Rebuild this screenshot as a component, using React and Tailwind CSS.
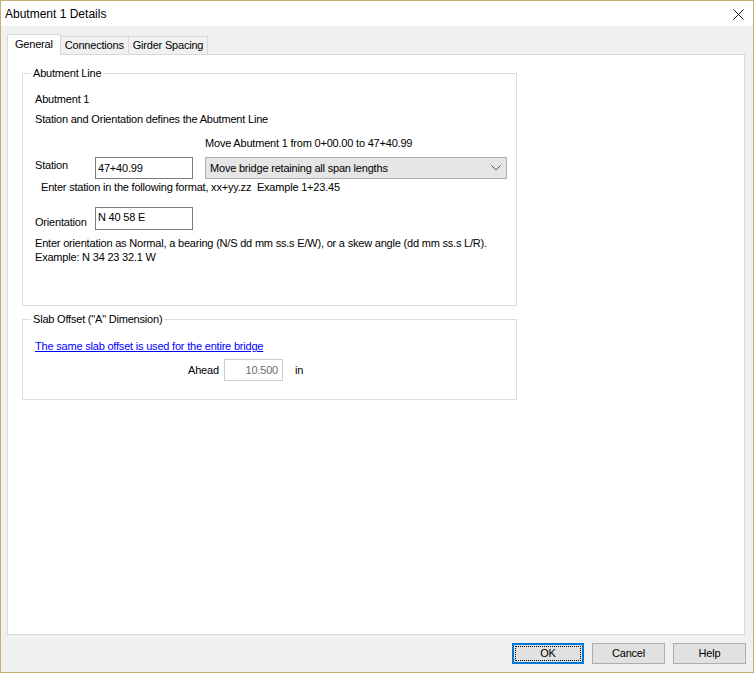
import React from "react";

/**
 * Abutment Details dialog (Windows style property sheet)
 */
function Tab({ label, active }) {
  if (active) {
    return (
      <div className="h-[21px] px-[7px] bg-white border border-b-0 border-[#d9d9d9] leading-[19px] relative z-10 -mb-px">
        {label}
      </div>
    );
  }
  return (
    <div className="h-[18px] mt-[3px] px-[4px] bg-[#f0f0f0] border border-b-0 border-l-0 border-[#d9d9d9] leading-[17px]">
      {label}
    </div>
  );
}

function Button({ label, focused }) {
  if (focused) {
    return (
      <div className="w-[72px] h-[21px] border-2 border-[#0078d7] bg-[#e1e1e1] p-px">
        <div className="h-full border border-dotted border-black flex items-center justify-center leading-none">
          {label}
        </div>
      </div>
    );
  }
  return (
    <div className="w-[73px] h-[21px] border border-[#adadad] bg-[#e1e1e1] flex items-center justify-center leading-none">
      {label}
    </div>
  );
}

function TextBox({ value, className = "", muted }) {
  return (
    <div
      className={
        "h-[22px] border flex items-center px-[2px] bg-white " +
        (muted ? "border-[#cccccc] text-[#6d6d6d] justify-end pr-[4px] " : "border-[#7a7a7a] ") +
        className
      }
    >
      {value}
    </div>
  );
}

export default function App() {
  return (
    <div
      className="w-[754px] h-[673px] border border-[#c6ad72] bg-[#f0f0f0] flex flex-col text-[11px] tracking-[-0.2px] text-black"
      style={{ fontFamily: '"Liberation Sans", Arial, sans-serif' }}
    >
      {/* title bar */}
      <div className="h-[25px] bg-white flex items-center justify-between pl-[4px] pr-[9px] tracking-normal">
        <span className="text-[12px]">Abutment 1 Details</span>
        <svg width="11" height="11" viewBox="0 0 11 11" className="mt-px">
          <path d="M0.5 0.5 L10.5 10.5 M10.5 0.5 L0.5 10.5" stroke="#111" strokeWidth="1" />
        </svg>
      </div>

      {/* tabs */}
      <div className="flex items-end mt-[7px] ml-[6px]">
        <Tab label="General" active />
        <Tab label="Connections" />
        <Tab label="Girder Spacing" />
      </div>

      {/* tab page */}
      <div className="ml-[6px] mr-[8px] h-[581px] bg-white border border-[#d9d9d9] pt-[12px]">
        <fieldset className="ml-[14px] w-[495px] h-[239px] border border-[#dcdcdc] pl-[12px]">
          <legend className="ml-[-4px] px-[2px] leading-[13px]">Abutment Line</legend>
          <div className="mt-[12px] leading-[14px]">Abutment 1</div>
          <div className="mt-[6px] leading-[14px]">Station and Orientation defines the Abutment Line</div>
          <div className="mt-[10px] ml-[170px] leading-[14px]">Move Abutment 1 from 0+00.00 to 47+40.99</div>
          <div className="mt-[7px] flex items-start">
            <div className="w-[60px] mt-px leading-[14px]">Station</div>
            <TextBox value="47+40.99" className="w-[98px]" />
            <div className="ml-[12px] w-[302px] h-[22px] border border-[#adadad] bg-[#e5e5e5] flex items-center justify-between pl-[4px] pr-[5px]">
              <span>Move bridge retaining all span lengths</span>
              <svg width="10" height="6" viewBox="0 0 10 6">
                <path d="M0.5 0.5 L5 5 L9.5 0.5" fill="none" stroke="#555" strokeWidth="1" />
              </svg>
            </div>
          </div>
          <div className="mt-px ml-[6px] leading-[14px]">
            Enter station in the following format, xx+yy.zz&nbsp;&nbsp;Example 1+23.45
          </div>
          <div className="mt-[13px] flex items-start">
            <div className="w-[60px] mt-[8px] leading-[14px]">Orientation</div>
            <TextBox value="N 40 58 E" className="w-[98px] h-[23px] items-start pt-px" />
          </div>
          <div className="mt-[6px] leading-[14px]">
            Enter orientation as Normal, a bearing (N/S dd mm ss.s E/W), or a skew angle (dd mm ss.s L/R).
            <br />
            Example: N 34 23 32.1 W
          </div>
        </fieldset>

        <fieldset className="ml-[14px] mt-[7px] w-[495px] h-[87px] border border-[#dcdcdc] pl-[12px]">
          <legend className="ml-[-4px] px-[2px] leading-[13px]">Slab Offset ("A" Dimension)</legend>
          <div className="mt-[13px] leading-[14px] text-[#0000ff] underline">
            The same slab offset is used for the entire bridge
          </div>
          <div className="mt-[6px] flex items-center">
            <div className="ml-[153px] w-[36px]">Ahead</div>
            <TextBox value="10.500" muted className="w-[59px]" />
            <div className="ml-[12px]">in</div>
          </div>
        </fieldset>
      </div>

      {/* buttons */}
      <div className="mt-[8px] flex justify-end gap-[8px] pr-[7px]">
        <Button label="OK" focused />
        <Button label="Cancel" />
        <Button label="Help" />
      </div>
    </div>
  );
}
